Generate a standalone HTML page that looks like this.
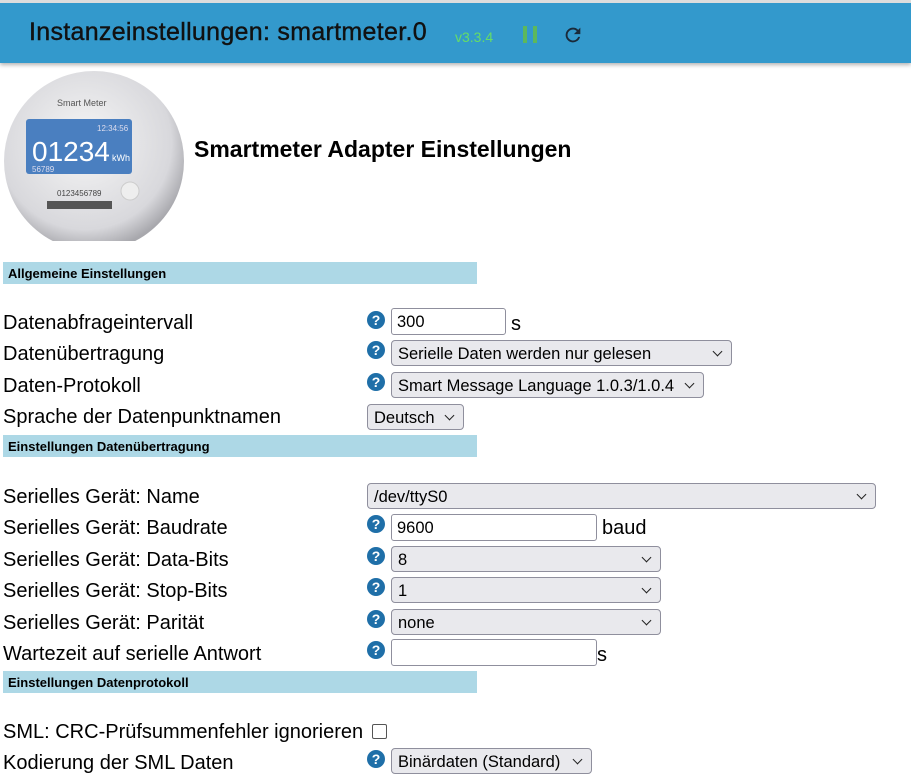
<!DOCTYPE html>
<html><head><meta charset="utf-8"><style>
*{box-sizing:border-box}
body{margin:0;width:911px;height:782px;overflow:hidden;background:#fff;font-family:"Liberation Sans",Arial,sans-serif;position:relative}
.hdr{position:absolute;left:0;top:0;width:911px;height:63px;background:#3399cc;border-top:3px solid #ddd;box-shadow:0 2px 4px rgba(0,0,0,.3)}
.hdr .t{position:absolute;left:29px;top:15px;font-size:25px;color:#111;letter-spacing:0.3px;-webkit-text-stroke:0.4px #111}
.hdr .v{position:absolute;left:455px;top:26px;font-size:14px;color:#66dd66}
.a{position:absolute}
.sec{position:absolute;left:3px;width:474px;height:22px;background:#add8e6;font-size:13px;font-weight:bold;padding:4px 0 0 5px;color:#000}
.lbl{position:absolute;left:3px;font-size:20px;color:#000;white-space:nowrap}
.q{position:absolute;left:367px;width:18px;height:18px;border-radius:50%;background:#1f6fa8;color:#fff;font-size:14px;font-weight:bold;text-align:center;line-height:18px}
.inp{position:absolute;height:27px;border:1px solid #8f8f9d;border-radius:3px;background:#fff;font-size:16.5px;padding:4px 5px}
.sel{position:absolute;height:26px;border:1px solid #8f8f9d;border-radius:4px;background:#e9e9ed;font-size:16.5px;padding:4px 6px;white-space:nowrap}
.sel:after{content:"";position:absolute;right:10px;top:7px;width:6px;height:6px;border-right:1.6px solid #222;border-bottom:1.6px solid #222;transform:rotate(45deg)}
.u{position:absolute;font-size:20px}
</style></head><body>
<div class="hdr"><div class="t">Instanzeinstellungen: smartmeter.0</div><div class="v">v3.3.4</div>
<div class="a" style="left:523px;top:23px;width:4px;height:17px;background:#5cb85c"></div>
<div class="a" style="left:533px;top:23px;width:4px;height:17px;background:#5cb85c"></div>
<svg class="a" style="left:562px;top:21px" width="22" height="22" viewBox="0 0 24 24"><path d="M17.65 6.35A7.96 7.96 0 0 0 12 4a8 8 0 1 0 7.73 10h-2.08A6 6 0 1 1 12 6c1.66 0 3.14.69 4.22 1.78L13 11h7V4l-2.35 2.35z" fill="#1a2a3a"/></svg>
</div>
<svg class="a" style="left:2px;top:66px" width="187" height="175" viewBox="0 0 187 175">
<defs><radialGradient id="g" cx="45%" cy="40%" r="60%"><stop offset="0" stop-color="#f6f6f6"/><stop offset=".8" stop-color="#d8d8dc"/><stop offset="1" stop-color="#a8a8ad"/></radialGradient></defs>
<ellipse cx="92" cy="95" rx="90" ry="90" fill="url(#g)"/>
<rect x="24" y="53" width="106" height="55" rx="3" fill="#4a7fc0"/>
<text x="30" y="95" font-size="28" fill="#fff" font-family="Liberation Sans">01234</text>
<text x="110" y="95" font-size="9" fill="#fff">kWh</text>
<text x="95" y="65" font-size="8" fill="#dde">12:34:56</text>
<text x="30" y="106" font-size="8" fill="#dde">56789</text>
<text x="55" y="40" font-size="9" fill="#555">Smart Meter</text>
<text x="55" y="130" font-size="8" fill="#444">0123456789</text>
<rect x="45" y="135" width="65" height="8" fill="#555"/>
<circle cx="128" cy="125" r="9" fill="#eee" stroke="#ccc"/>
</svg>
<div class="a" style="left:194px;top:136px;font-size:23px;font-weight:bold">Smartmeter Adapter Einstellungen</div>

<div class="sec" style="top:262px">Allgemeine Einstellungen</div>
<div class="lbl" style="top:312px">Datenabfrageintervall</div><div class="q" style="top:311px">?</div><div class="inp" style="left:391px;top:308px;width:115px">300</div><div class="u" style="left:511px;top:313px">s</div>
<div class="lbl" style="top:343px">Datenübertragung</div><div class="q" style="top:341px">?</div><div class="sel" style="left:391px;top:340px;width:341px">Serielle Daten werden nur gelesen</div>
<div class="lbl" style="top:375px">Daten-Protokoll</div><div class="q" style="top:373px">?</div><div class="sel" style="left:391px;top:372px;width:313px">Smart Message Language 1.0.3/1.0.4</div>
<div class="lbl" style="top:406px">Sprache der Datenpunktnamen</div><div class="sel" style="left:367px;top:404px;width:97px">Deutsch</div>

<div class="sec" style="top:435px">Einstellungen Datenübertragung</div>
<div class="lbl" style="top:486px">Serielles Gerät: Name</div><div class="sel" style="left:367px;top:483px;width:509px">/dev/ttyS0</div>
<div class="lbl" style="top:517px">Serielles Gerät: Baudrate</div><div class="q" style="top:515px">?</div><div class="inp" style="left:391px;top:514px;width:206px">9600</div><div class="u" style="left:602px;top:517px">baud</div>
<div class="lbl" style="top:549px">Serielles Gerät: Data-Bits</div><div class="q" style="top:547px">?</div><div class="sel" style="left:391px;top:546px;width:270px">8</div>
<div class="lbl" style="top:580px">Serielles Gerät: Stop-Bits</div><div class="q" style="top:578px">?</div><div class="sel" style="left:391px;top:577px;width:270px">1</div>
<div class="lbl" style="top:612px">Serielles Gerät: Parität</div><div class="q" style="top:610px">?</div><div class="sel" style="left:391px;top:609px;width:270px">none</div>
<div class="lbl" style="top:643px">Wartezeit auf serielle Antwort</div><div class="q" style="top:641px">?</div><div class="inp" style="left:391px;top:639px;width:206px"></div><div class="u" style="left:597px;top:644px">s</div>

<div class="sec" style="top:671px">Einstellungen Datenprotokoll</div>
<div class="lbl" style="top:721px">SML: CRC-Prüfsummenfehler ignorieren</div><div class="a" style="left:372px;top:724px;width:15px;height:15px;border:1.5px solid #555;border-radius:2px"></div>
<div class="lbl" style="top:752px">Kodierung der SML Daten</div><div class="q" style="top:750px">?</div><div class="sel" style="left:391px;top:748px;width:201px">Binärdaten (Standard)</div>
</body></html>
